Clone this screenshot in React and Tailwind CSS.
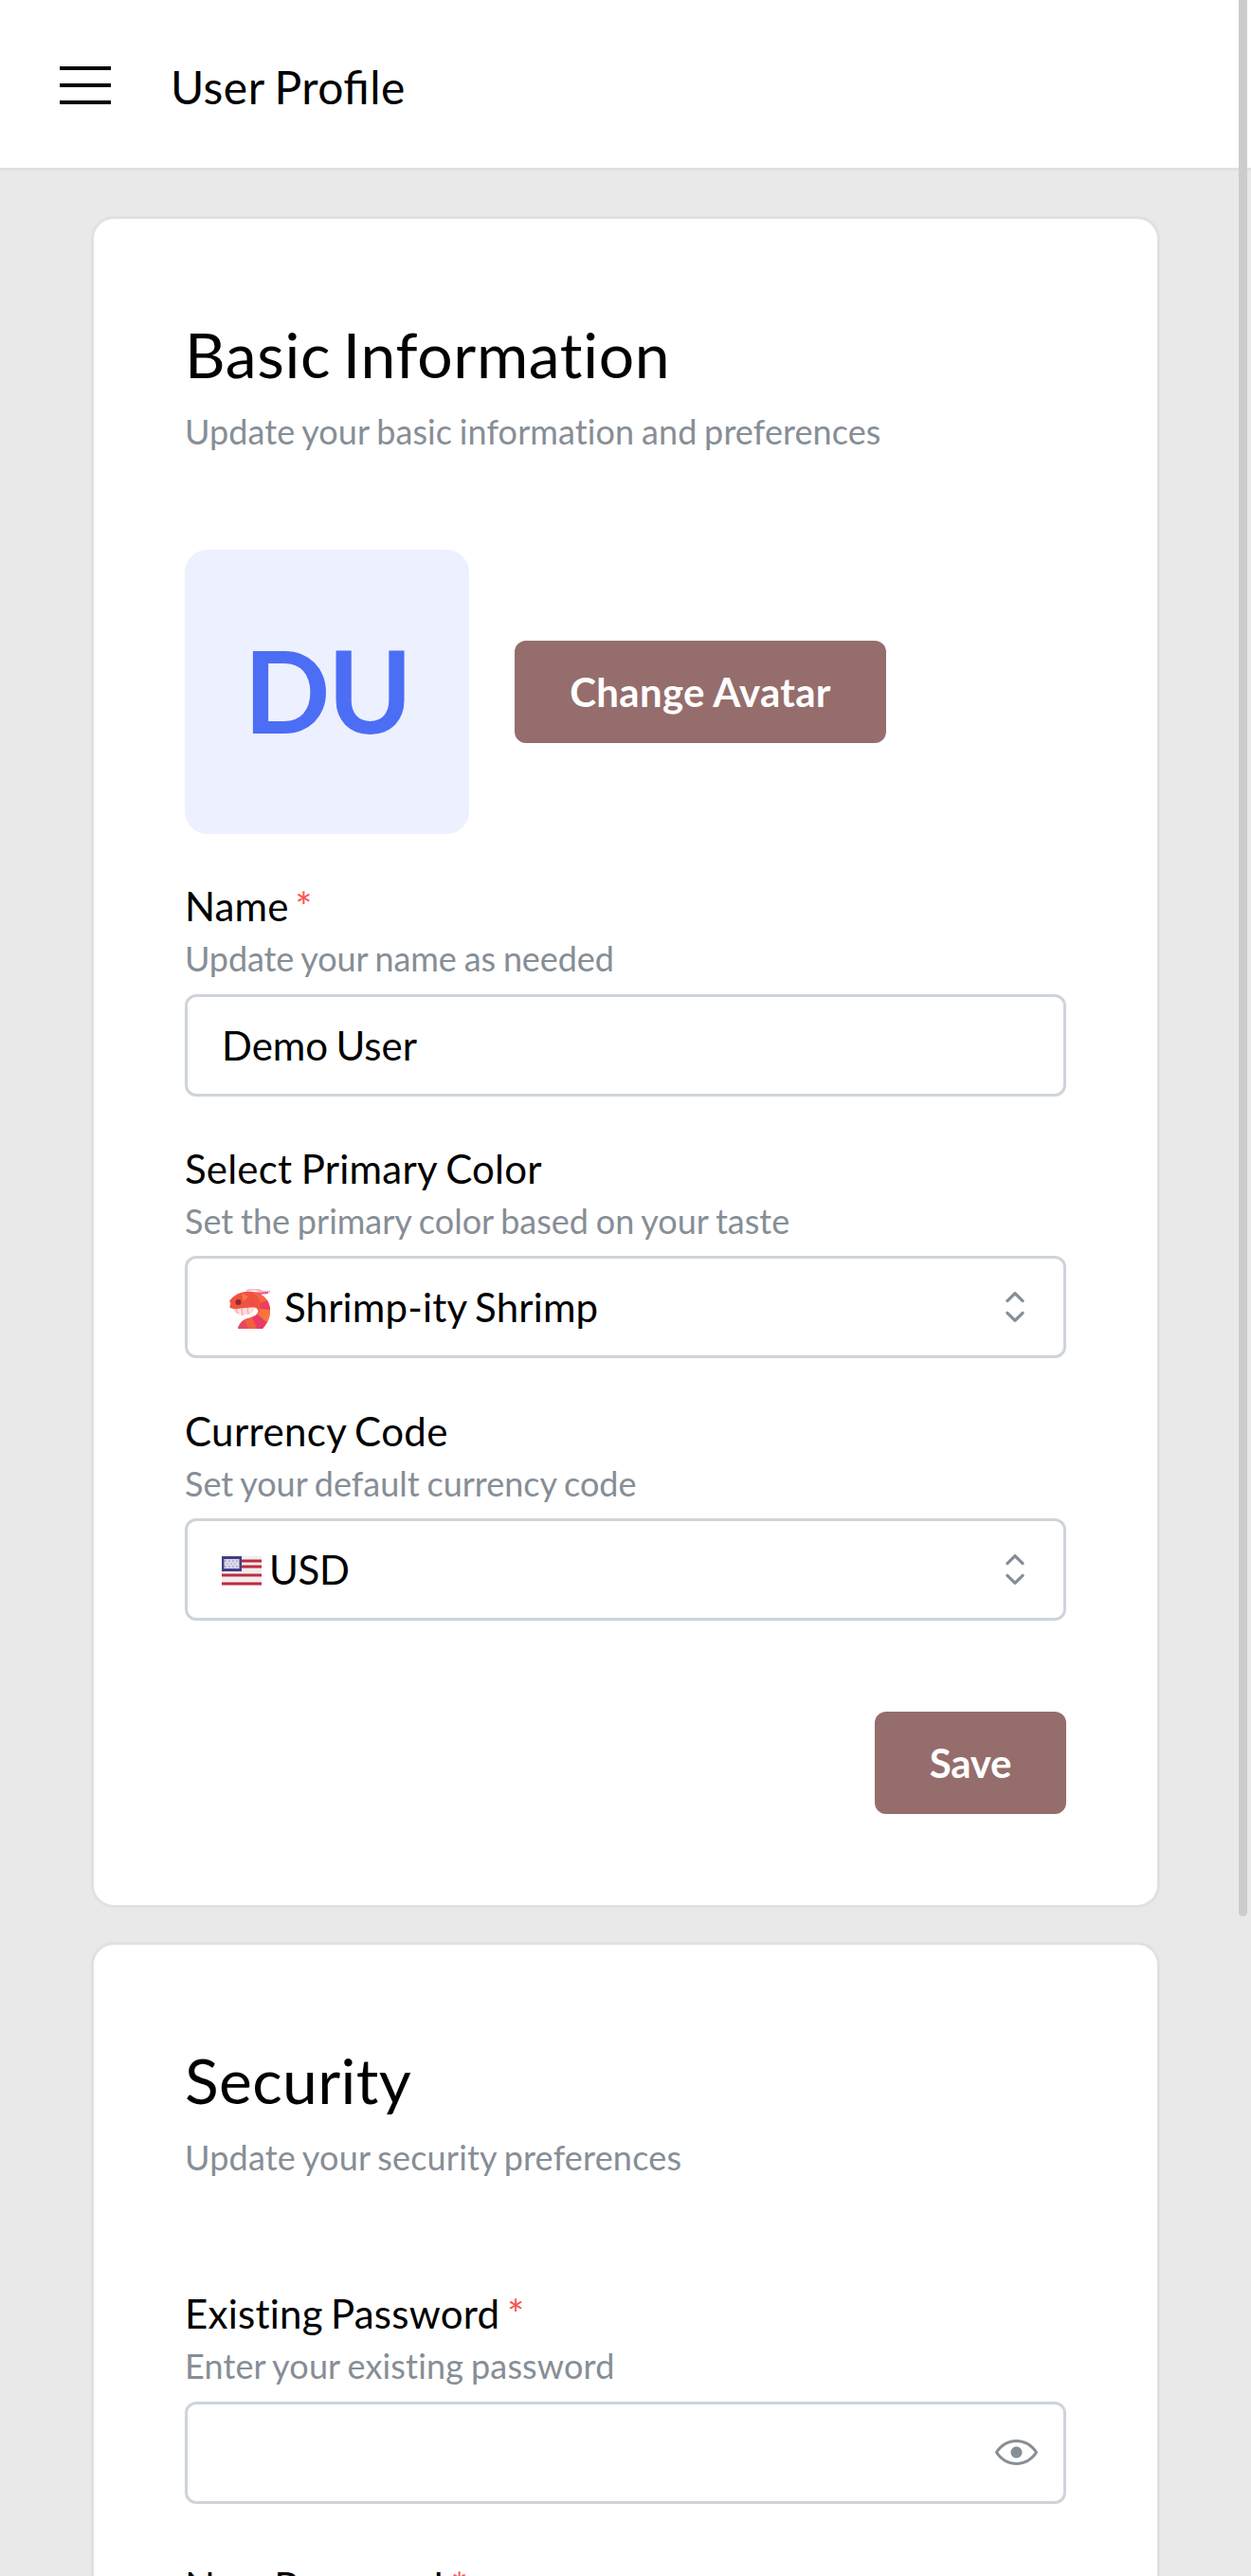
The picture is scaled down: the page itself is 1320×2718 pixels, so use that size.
import React from "react";

const CHEVRONS =
  "M4.93179 5.43179C4.75605 5.60753 4.75605 5.89245 4.93179 6.06819C5.10753 6.24392 5.39245 6.24392 5.56819 6.06819L7.49999 4.13638L9.43179 6.06819C9.60753 6.24392 9.89245 6.24392 10.0682 6.06819C10.2439 5.89245 10.2439 5.60753 10.0682 5.43179L7.81819 3.18179C7.73379 3.0974 7.61933 3.04999 7.49999 3.04999C7.38064 3.04999 7.26618 3.0974 7.18179 3.18179L4.93179 5.43179ZM10.0682 9.56819C10.2439 9.39245 10.2439 9.10753 10.0682 8.93179C9.89245 8.75606 9.60753 8.75606 9.43179 8.93179L7.49999 10.8636L5.56819 8.93179C5.39245 8.75606 5.10753 8.75606 4.93179 8.93179C4.75605 9.10753 4.75605 9.39245 4.93179 9.56819L7.18179 11.8182C7.35753 11.9939 7.64245 11.9939 7.81819 11.8182L10.0682 9.56819Z";

const EYE =
  "M7.5 11C4.80285 11 2.52952 9.62184 1.09622 7.50001C2.52952 5.37816 4.80285 4 7.5 4C10.1971 4 12.4705 5.37816 13.9038 7.50001C12.4705 9.62183 10.1971 11 7.5 11ZM7.5 3C4.30786 3 1.65639 4.70638 0.0760002 7.23501C-0.0253338 7.39715 -0.0253334 7.60288 0.0760014 7.76501C1.65639 10.2936 4.30786 12 7.5 12C10.6921 12 13.3436 10.2936 14.924 7.76501C15.0253 7.60288 15.0253 7.39715 14.924 7.23501C13.3436 4.70638 10.6921 3 7.5 3ZM7.5 9.5C8.60457 9.5 9.5 8.60457 9.5 7.5C9.5 6.39543 8.60457 5.5 7.5 5.5C6.39543 5.5 5.5 6.39543 5.5 7.5C5.5 8.60457 6.39543 9.5 7.5 9.5Z";

function Chevrons() {
  return (
    <svg viewBox="0 0 15 15" className="mr-6 h-[54px] w-[54px] text-[#868e96]" fill="currentColor">
      <path d={CHEVRONS} fillRule="evenodd" clipRule="evenodd" />
    </svg>
  );
}

function Eye() {
  return (
    <svg viewBox="0 0 15 15" className="mr-[27px] ml-auto h-[45px] w-[45px] text-[#868e96]" fill="currentColor">
      <path d={EYE} fillRule="evenodd" clipRule="evenodd" />
    </svg>
  );
}

function Shrimp() {
  return (
    <svg viewBox="0 0 45 42" className="mt-[3px] h-[42px] w-[45px] shrink-0">
      <path d="M20 2C25 0 32 0 37 3M28 5C34 2 39 3 45 3" fill="none" stroke="#f9b9c6" strokeWidth="2.4" />
      <path d="M31 5L43 4" stroke="#ee4f98" strokeWidth="1.8" />
      <path d="M4 19L8 25L16 28L25 26L30 20Z" fill="#fbdcdc" />
      <path d="M9 21L11 26M15 21L16 28M21 20L22 27" stroke="#f3a3a8" strokeWidth="1.2" />
      <path d="M2 13C8 4 18 2 27 3C38 4 45 13 45 23C45 33 40 39 37 42H11C12 37 16 32 21 31C28 30 34 26 32 22C30 18 24 20 19 20C14 20 8 22 3 20C1 18 5 16 2 13Z" fill="#f0543f" />
      <path d="M26 4C32 7 34 10 35 15L42 12C38 7 32 4 26 4Z" fill="#f7683a" />
      <path d="M35 15L42 12C44 15 45 19 45 22L34 21Z" fill="#ee3d60" />
      <path d="M34 21L45 22C45 28 43 32 41 35L32 27C34 25 34 23 34 21Z" fill="#f8753a" />
      <path d="M32 27L41 35C40 38 38 40 37 42H31L26 30Z" fill="#ea3a68" />
      <path d="M26 30L31 42H22L18 33Z" fill="#f2603f" />
      <path d="M18 33L22 42H11C12 38 15 34 18 33Z" fill="#e44a64" />
      <path d="M15 5L22 8L17 13Z" fill="#f77a45" />
      <path d="M23 12L31 15L26 19Z" fill="#ee4a4f" />
      <circle cx="11.5" cy="14" r="3" fill="#8d2c2c" />
    </svg>
  );
}

function Flag() {
  return (
    <svg viewBox="0 0 42 31" className="mt-[3px] h-[31px] w-[42px] shrink-0">
      <rect width="42" height="31" fill="#efeeee" />
      <path d="M20 5H42M20 11H42M0 20H42M0 29H42" stroke="#c02a40" strokeWidth="2.8" />
      <rect width="21" height="16" fill="#3f3f82" />
      <rect x="2.5" y="3" width="16" height="10" fill="#d9d9e8" />
      <path d="M3 5H18M3 11H18" stroke="#a3a3c8" strokeWidth="1.3" strokeDasharray="1.8 2.2" />
      <path d="M5 8H17" stroke="#bdbdd8" strokeWidth="1.3" strokeDasharray="2 2" />
    </svg>
  );
}

function Field({ label, labelClass, hint, hintClass, required, className, children }) {
  return (
    <div className={className}>
      <div className="mb-[2px] text-[42px] leading-[63.1px] text-black">
        <span className={labelClass}>
          {label}
          {required && <span className="text-[#fa5252]"> *</span>}
        </span>
      </div>
      <div className="mb-[15px] text-[36px] leading-[43.2px] text-[#868e96]">
        <span className={hintClass}>{hint}</span>
      </div>
      <div className="flex h-[108px] items-center rounded-[12px] border-[3px] border-[#ced4da] bg-white pl-9 text-[42px] leading-none text-black">
        {children}
      </div>
    </div>
  );
}

function Card({ title, titleClass, hint, hintClass, children }) {
  return (
    <section className="rounded-[24px] border-[3px] border-[#dee2e6] bg-white p-24">
      <h3 className="mb-2 text-[66px] leading-[93.1px] font-normal text-black">
        <span className={titleClass}>{title}</span>
      </h3>
      <p className="mb-24 text-[36px] leading-[55.8px] text-[#868e96]">
        <span className={hintClass}>{hint}</span>
      </p>
      {children}
    </section>
  );
}

function Button({ className, children }) {
  return (
    <button className={`flex h-[108px] items-center justify-center rounded-[12px] bg-[#956d6c] text-[42px] leading-none font-bold text-white ${className}`}>
      {children}
    </button>
  );
}

export default function App() {
  return (
    <div className="relative h-[2718px] w-[1320px] overflow-hidden bg-[#e9e9e9] font-['Lato',sans-serif] [font-variant-ligatures:none]">
      <header className="flex h-[180px] items-center border-b-[3px] border-[#dee2e6] bg-white pt-[3px] pl-[63px]">
        <div className="flex w-[54px] flex-col gap-[14px]">
          <span className="h-1 bg-black" />
          <span className="h-1 bg-black" />
          <span className="h-1 bg-black" />
        </div>
        <h1 className="ml-[63px] pt-[3px] text-[48px] leading-[74px] font-normal tracking-[0.45px] text-black [font-feature-settings:'liga'_1] [word-spacing:-1.9px]">
          User Profile
        </h1>
      </header>

      <main className="flex flex-col gap-9 px-24 pt-12">
        <Card
          title="Basic Information"
          titleClass="tracking-[0.65px] [word-spacing:-4.8px]"
          hint="Update your basic information and preferences"
          hintClass="tracking-[0.1px] [word-spacing:-1.6px]"
        >
          <div className="flex items-center gap-12">
            <div className="flex h-[300px] w-[300px] items-center justify-center rounded-[24px] bg-[#edf0ff] pb-[3px] text-[120px] leading-none font-bold tracking-[-2.5px] text-[#4c6ef5]">
              DU
            </div>
            <Button className="w-[392px] tracking-[0.3px] [word-spacing:-0.5px]">Change Avatar</Button>
          </div>
          <Field
            className="pt-[45.4px]"
            label="Name"
            labelClass="tracking-[0.1px] [word-spacing:-3.8px]"
            hint="Update your name as needed"
            hintClass="tracking-[-0.1px] [word-spacing:-1.2px]"
            required
          >
            <span className="[word-spacing:-2.5px]">Demo User</span>
          </Field>
          <Field
            className="pt-[45.4px]"
            label="Select Primary Color"
            labelClass="tracking-[0.2px] [word-spacing:-1.4px]"
            hint="Set the primary color based on your taste"
            hintClass="[word-spacing:-1.4px]"
          >
            <span className="ml-[6px] flex flex-1 items-center gap-[15px]">
              <Shrimp />
              <span className="tracking-[0.15px] [word-spacing:-2px]">Shrimp-ity Shrimp</span>
            </span>
            <Chevrons />
          </Field>
          <Field
            className="pt-[45.4px]"
            label="Currency Code"
            labelClass="tracking-[0.4px] [word-spacing:-2.4px]"
            hint="Set your default currency code"
            hintClass="[word-spacing:-1.4px]"
          >
            <span className="flex flex-1 items-center gap-2">
              <Flag />
              <span className="tracking-[-0.3px]">USD</span>
            </span>
            <Chevrons />
          </Field>
          <div className="flex justify-end pt-24">
            <Button className="w-[202px] tracking-[-0.3px]">Save</Button>
          </div>
        </Card>

        <Card
          title="Security"
          titleClass="tracking-[0.35px]"
          hint="Update your security preferences"
          hintClass="tracking-[0.2px] [word-spacing:-1.7px]"
        >
          <Field
            className="pt-[9.4px]"
            label="Existing Password"
            labelClass="tracking-[0.25px] [word-spacing:-2.9px]"
            hint="Enter your existing password"
            hintClass="tracking-[0.15px] [word-spacing:-1.4px]"
            required
          >
            <Eye />
          </Field>
          <Field
            className="pt-[56.4px]"
            label="New Password"
            labelClass="tracking-[0.25px] [word-spacing:-2.9px]"
            hint="Enter your new password"
            hintClass="tracking-[0.15px] [word-spacing:-1.4px]"
            required
          >
            <Eye />
          </Field>
        </Card>
      </main>

      <div className="absolute top-0 right-1 h-[2022px] w-[9.5px] rounded-b-full bg-[#cccccc]" />
    </div>
  );
}
